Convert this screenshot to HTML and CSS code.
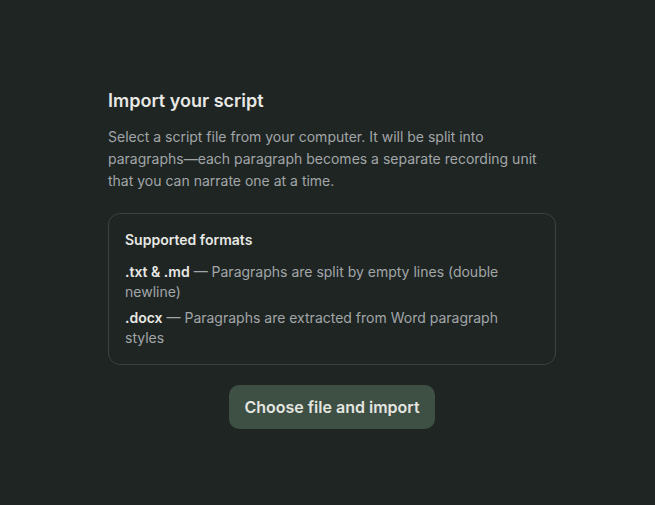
FILE: index.html
```html
<!DOCTYPE html>
<html>
<head>
<meta charset="utf-8">
<link rel="stylesheet" href="styles.css">
</head>
<body>
<main class="page">
  <section class="import">
    <h1 class="title">Import your script</h1>
    <p class="lead">Select a script file from your computer. It will be split into paragraphs—each paragraph becomes a separate recording unit that you can narrate one at a time.</p>
    <div class="formats">
      <h2 class="formats-title">Supported formats</h2>
      <p class="format"><strong>.txt &amp; .md</strong> — Paragraphs are split by empty lines (double newline)</p>
      <p class="format"><strong>.docx</strong> — Paragraphs are extracted from Word paragraph styles</p>
    </div>
    <div class="actions">
      <button class="btn">Choose file and import</button>
    </div>
  </section>
</main>
</body>
</html>
```
FILE: styles.css
```css
* { box-sizing: border-box; }
html, body { margin: 0; padding: 0; }
body {
  background: #1f2523;
  font-family: Inter, "Noto Sans", sans-serif;
  color: #e6e6e2;
  height: 505px;
}
.page {
  padding: 87px 0 0 108px;
}
.import {
  width: 448px;
}
.title {
  margin: 0;
  font-size: 18px;
  line-height: 28px;
  font-weight: 600;
  color: #e8e8e4;
}
.lead {
  margin: 11px 0 0;
  font-size: 14px;
  line-height: 22px;
  color: #a2a6a9;
}
.formats {
  margin-top: 21px;
  border: 1px solid #3b423f;
  border-radius: 12px;
  padding: 16px;
}
.formats-title {
  margin: 0 0 12px;
  font-size: 14px;
  line-height: 20px;
  font-weight: 600;
  color: #e8e8e4;
}
.format {
  margin: 0;
  font-size: 14px;
  line-height: 20px;
  color: #a2a6a9;
}
.format + .format { margin-top: 6px; }
.format strong {
  font-weight: 600;
  color: #e8e8e4;
}
.actions {
  display: flex;
  justify-content: center;
  margin-top: 20px;
}
.btn {
  font-family: Inter, "Noto Sans", sans-serif;
  font-size: 16px;
  line-height: 22px;
  font-weight: 600;
  color: #e4e6e0;
  background: #3e4f44;
  border: none;
  border-radius: 10px;
  padding: 11px 15px;
}
```
